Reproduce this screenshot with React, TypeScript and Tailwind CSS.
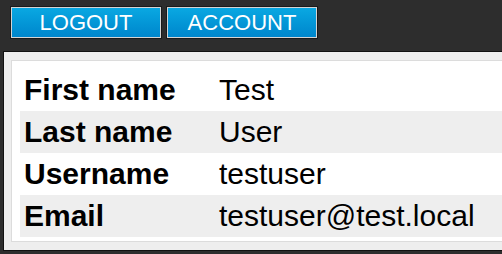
const ROWS: [string, string][] = [
  ["First name", "Test"],
  ["Last name", "User"],
  ["Username", "testuser"],
  ["Email", "testuser@test.local"],
];

export default function App() {
  return (
    <div className="h-[254px] w-[502px] overflow-hidden bg-[#2d2d2d] font-['Liberation_Sans',Arial,sans-serif]">
      <div className="flex gap-[6px] pl-[11px] pt-[7px]">
        {["LOGOUT", "ACCOUNT"].map((b) => (
          <button
            key={b}
            className="flex h-[31px] w-[150px] items-center justify-center border border-[#d4d4d4] bg-gradient-to-b from-[#0aa8e2] to-[#0086cc] text-[22px] leading-none text-white shadow-[0_0_0_1px_#1a1a1a]"
          >
            {b}
          </button>
        ))}
      </div>
      <div className="ml-[3px] mt-[13px] w-[520px] border-t border-l border-b border-[#111] bg-[#eeeeee] px-[7px] pt-[8px] pb-[8px]">
        <div className="border border-[#dcdcdc] bg-white px-[8px] pt-[8px] pb-[4px]">
          <table className="w-full border-collapse text-[30px] text-black">
            <tbody>
              {ROWS.map(([k, v], i) => (
                <tr key={k} className={i % 2 === 1 ? "h-[42px] bg-[#eeeeee]" : "h-[42px]"}>
                  <td className="w-[195px] px-[4px] py-0 font-bold leading-[42px]">{k}</td>
                  <td className="px-[4px] py-0 leading-[42px]">{v}</td>
                </tr>
              ))}
            </tbody>
          </table>
        </div>
      </div>
    </div>
  );
}
